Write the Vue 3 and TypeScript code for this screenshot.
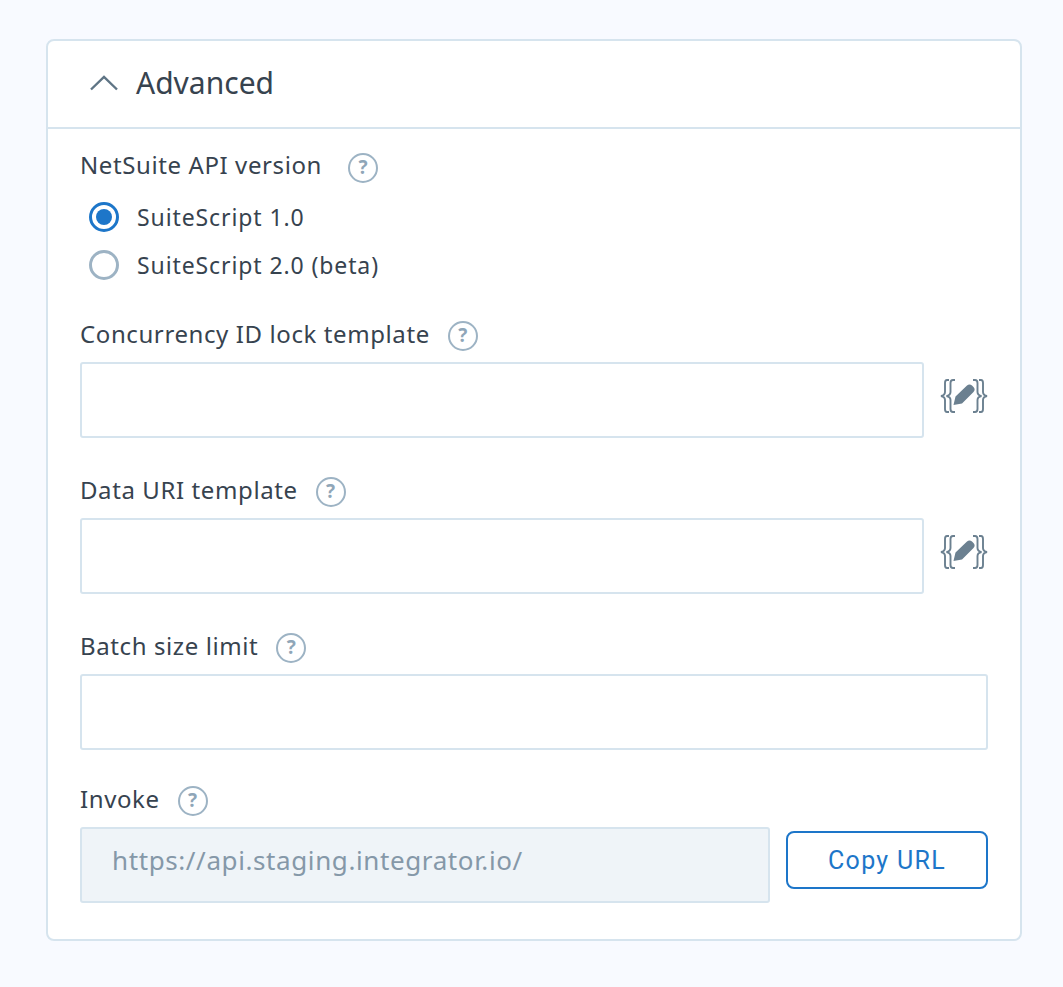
<script setup lang="ts">
const fields = [
  { label: 'Concurrency ID lock template', handlebar: true, cls: 'gap-first' },
  { label: 'Data URI template', handlebar: true, cls: '' },
  { label: 'Batch size limit', handlebar: false, cls: '' },
]
</script>

<template>
  <div class="card">
    <header class="head">
      <svg class="chev" width="30" height="16" viewBox="0 0 30 16" fill="none">
        <path d="M2 14.5 L15 2 L28 14.5" stroke="#5f7585" stroke-width="2.4" />
      </svg>
      <h2 class="title">Advanced</h2>
    </header>
    <div class="body">
      <div class="label-row">
        <span class="label">NetSuite API version</span>
        <span class="help wide">?</span>
      </div>
      <div class="radio-row">
        <span class="radio on"><span class="dot"></span></span>
        <span class="radio-text">SuiteScript 1.0</span>
      </div>
      <div class="radio-row">
        <span class="radio"></span>
        <span class="radio-text">SuiteScript 2.0 (beta)</span>
      </div>

      <section v-for="f in fields" :key="f.label" class="field" :class="f.cls">
        <div class="label-row">
          <span class="label">{{ f.label }}</span>
          <span class="help">?</span>
        </div>
        <div class="input-row">
          <div class="input"></div>
          <svg v-if="f.handlebar" class="hb" width="48" height="36" viewBox="0 0 48 36" fill="none">
            <g stroke="#6b8090" stroke-width="1.9">
              <path d="M9 2 H7 C5.5 2 5 3 5 5 V14 C5 16 3.5 17.5 1 18 C3.5 18.5 5 20 5 22 V31 C5 33 5.5 34 7 34 H9" />
              <path d="M15 2 H13 C11 2 10.5 3 10.5 5 V14 C10.5 16 9 17.5 6.5 18 C9 18.5 10.5 20 10.5 22 V31 C10.5 33 11 34 13 34 H15" />
              <path d="M33 2 H35 C37 2 37.5 3 37.5 5 V14 C37.5 16 39 17.5 41.5 18 C39 18.5 37.5 20 37.5 22 V31 C37.5 33 37 34 35 34 H33" />
              <path d="M39 2 H41 C42.5 2 43 3 43 5 V14 C43 16 44.5 17.5 47 18 C44.5 18.5 43 20 43 22 V31 C43 33 42.5 34 41 34 H39" />
            </g>
            <path d="M13.5 27 L15.5 18.5 L27 7.5 C28.5 6 30.5 6 32 7.5 L33.5 9 C35 10.5 35 12.5 33.5 14 L22 25.5 Z" fill="#6b8090" />
          </svg>
        </div>
      </section>

      <section class="field invoke">
        <div class="label-row">
          <span class="label">Invoke</span>
          <span class="help">?</span>
        </div>
        <div class="input-row invoke-row">
          <div class="input disabled">https://api.staging.integrator.io/</div>
          <button class="copy" type="button">Copy URL</button>
        </div>
      </section>
    </div>
  </div>
</template>

<style>
html, body { background: #f8faff; }
</style>

<style scoped>
.card {
  box-sizing: border-box;
  width: 976px;
  height: 902px;
  margin: 39px 0 0 46px;
  background: #fff;
  border: 2px solid #d6e4ee;
  border-radius: 8px;
  font-family: "Noto Sans", sans-serif;
  color: #37434f;
}
.head {
  box-sizing: border-box;
  height: 88px;
  border-bottom: 2px solid #d6e4ee;
  display: flex;
  align-items: center;
  padding-left: 41px;
}
.chev { margin-right: 17px; margin-top: -2px; }
.title {
  margin: -3px 0 0;
  font-size: 30px;
  font-weight: 400;
  line-height: 40px;
}
.body { padding: 22px 32px 0; }
.label-row {
  height: 28px;
  display: flex;
  align-items: center;
}
.label { font-size: 24px; line-height: 28px; letter-spacing: 0.6px; }
.help {
  box-sizing: border-box;
  width: 30px;
  height: 30px;
  margin-left: 18px;
  margin-top: 4px;
  border: 2px solid #9db3c4;
  border-radius: 50%;
  color: #8fa6b8;
  font-size: 19px;
  font-weight: 700;
  line-height: 25px;
  text-align: center;
  flex: none;
}
.help.wide { margin-left: 26px; margin-top: 6px; }
.radio-row {
  height: 48px;
  display: flex;
  align-items: center;
  padding-left: 9px;
}
.radio-row:nth-child(2) { margin-top: 14px; }
.radio {
  box-sizing: border-box;
  width: 30px;
  height: 30px;
  border: 3px solid #9db3c4;
  border-radius: 50%;
  margin-right: 18px;
  display: flex;
  align-items: center;
  justify-content: center;
  flex: none;
}
.radio.on { border-color: #1d76c9; }
.dot { width: 16px; height: 16px; border-radius: 50%; background: #1d76c9; }
.radio-text { font-size: 23px; line-height: 28px; letter-spacing: 0.9px; }
.field { margin-top: 38px; }
.field.gap-first { margin-top: 31px; }
.field.invoke { margin-top: 35px; }
.input-row {
  margin-top: 14px;
  display: flex;
  align-items: flex-start;
}
.input {
  box-sizing: border-box;
  flex: 1;
  height: 76px;
  background: #fff;
  border: 2px solid #d6e4ee;
  border-radius: 3px;
}
.hb { flex: none; margin: 16px 0 0 16px; }
.disabled {
  flex: none;
  width: 690px;
  background: #eff4f8;
  color: #8598a8;
  font-size: 26px;
  letter-spacing: 0.6px;
  line-height: 62px;
  padding-left: 30px;
}
.copy {
  box-sizing: border-box;
  margin: 4px 0 0 16px;
  width: 202px;
  height: 58px;
  background: #fff;
  border: 2px solid #1d76c9;
  border-radius: 8px;
  color: #1d76c9;
  font-family: Roboto, sans-serif;
  font-size: 25px;
  letter-spacing: 1.3px;
  padding: 0;
}
</style>
